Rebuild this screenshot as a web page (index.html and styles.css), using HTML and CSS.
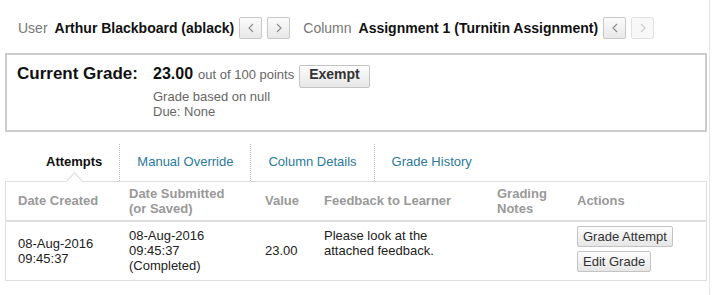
FILE: index.html
```html
<!DOCTYPE html>
<html lang="en">
<head>
    <meta charset="UTF-8">
    <title>Grade Details</title>
    <link rel="stylesheet" href="styles.css">
</head>
<body>
<div class="page">
    <div class="nav-row">
        <span class="nav-label">User</span>
        <span class="nav-value">Arthur Blackboard (ablack)</span>
        <span class="pager">
            <button class="pager-btn" title="Previous user">
                <svg width="6" height="10" viewBox="0 0 6 10"><polyline points="5,1 1,5 5,9"/></svg>
            </button>
            <button class="pager-btn" title="Next user">
                <svg width="6" height="10" viewBox="0 0 6 10"><polyline points="1,1 5,5 1,9"/></svg>
            </button>
        </span>
        <span class="nav-label">Column</span>
        <span class="nav-value">Assignment 1 (Turnitin Assignment)</span>
        <span class="pager">
            <button class="pager-btn" title="Previous column">
                <svg width="6" height="10" viewBox="0 0 6 10"><polyline points="5,1 1,5 5,9"/></svg>
            </button>
            <button class="pager-btn disabled" title="Next column">
                <svg width="6" height="10" viewBox="0 0 6 10"><polyline points="1,1 5,5 1,9"/></svg>
            </button>
        </span>
    </div>

    <div class="grade-box">
        <div class="grade-label">Current Grade:</div>
        <div class="grade-info">
            <div class="grade-line">
                <span class="grade-value">23.00</span>
                <span class="grade-points">out of 100 points</span>
                <button class="btn btn-exempt">Exempt</button>
            </div>
            <div class="grade-notes">
                <div>Grade based on null</div>
                <div>Due: None</div>
            </div>
        </div>
    </div>

    <ul class="tabs">
        <li class="tab active">Attempts</li>
        <li class="tab">Manual Override</li>
        <li class="tab">Column Details</li>
        <li class="tab">Grade History</li>
    </ul>

    <div class="attempts">
        <table>
            <colgroup>
                <col class="c-created">
                <col class="c-submitted">
                <col class="c-value">
                <col class="c-feedback">
                <col class="c-notes">
                <col>
            </colgroup>
            <thead>
                <tr>
                    <th>Date Created</th>
                    <th>Date Submitted<br>(or Saved)</th>
                    <th>Value</th>
                    <th>Feedback to Learner</th>
                    <th>Grading<br>Notes</th>
                    <th>Actions</th>
                </tr>
            </thead>
            <tbody>
                <tr>
                    <td>08-Aug-2016<br>09:45:37</td>
                    <td>08-Aug-2016<br>09:45:37<br>(Completed)</td>
                    <td>23.00</td>
                    <td><div class="feedback">Please look at the attached feedback.</div></td>
                    <td></td>
                    <td>
                        <button class="btn btn-action">Grade Attempt</button>
                        <button class="btn btn-action">Edit Grade</button>
                    </td>
                </tr>
            </tbody>
        </table>
    </div>
</div>
</body>
</html>
```

FILE: styles.css
```css
body {
    margin: 0;
    font-family: "Liberation Sans", Arial, sans-serif;
    color: #222;
    background: #fff;
}
.page {
    width: 710px;
    min-height: 295px;
    box-sizing: border-box;
    border-right: 1px solid #e6e6e6;
}

/* user / column switcher */
.nav-row {
    display: flex;
    align-items: center;
    height: 22px;
    padding: 17px 0 0 18px;
    font-size: 14px;
}
.nav-label {
    color: #777;
    margin-right: 7px;
}
.nav-value {
    font-weight: bold;
    color: #111;
    margin-right: 5px;
}
.pager {
    display: flex;
    gap: 5px;
    margin-right: 13px;
}
.pager-btn {
    display: flex;
    align-items: center;
    justify-content: center;
    width: 23px;
    height: 22px;
    padding: 0;
    border: 1px solid #c8c8c8;
    border-radius: 2px;
    background: linear-gradient(#fbfbfb, #e8e8e8);
}
.pager-btn svg polyline {
    fill: none;
    stroke: #8a8a8a;
    stroke-width: 1.1;
}
.pager-btn.disabled {
    border-color: #e2e2e2;
    background: #f8f8f8;
}
.pager-btn.disabled svg polyline {
    stroke: #ccc;
}

/* buttons */
.btn {
    box-sizing: border-box;
    font-family: "Liberation Sans", Arial, sans-serif;
    color: #333;
    border: 1px solid #c4c4c4;
    border-radius: 2px;
    background: linear-gradient(#fdfdfd, #e6e6e6);
}

/* current grade */
.grade-box {
    display: flex;
    align-items: baseline;
    margin: 14px 2px 0 5px;
    padding: 9px 10px 11px;
    border: 2px solid #ccc;
}
.grade-label {
    flex-shrink: 0;
    width: 136px;
    font-size: 17px;
    font-weight: bold;
    color: #111;
}
.grade-line {
    display: flex;
    align-items: baseline;
}
.grade-value {
    font-size: 16px;
    font-weight: bold;
    color: #111;
    margin-right: 5px;
}
.grade-points {
    font-size: 13px;
    color: #666;
    margin-right: 5px;
}
.btn-exempt {
    height: 23px;
    padding: 0 9px 4px;
    font-size: 14px;
    font-weight: bold;
}
.grade-notes {
    margin-top: 1px;
    font-size: 13px;
    line-height: 15px;
    color: #666;
}

/* tabs */
.tabs {
    display: flex;
    list-style: none;
    margin: 12px 0 0 29px;
    padding: 0;
}
.tab {
    position: relative;
    padding: 10px 17px 12px;
    font-size: 13px;
    line-height: 15px;
    color: #2b7a9b;
    border-right: 1px dotted #bbb;
}
.tab:last-child {
    border-right: none;
}
.tab.active {
    font-weight: bold;
    color: #111;
}
.tab.active::after {
    content: "";
    position: absolute;
    left: 50%;
    bottom: -7px;
    width: 12px;
    height: 12px;
    margin-left: -6px;
    background: #fff;
    border-top: 1px solid #ddd;
    border-left: 1px solid #ddd;
    transform: rotate(45deg);
    z-index: 1;
}

/* attempts table */
.attempts {
    margin: 0 2px 0 5px;
    border: 1px solid #ddd;
}
.attempts table {
    width: 100%;
    border-collapse: collapse;
    table-layout: fixed;
}
.c-created { width: 111px; }
.c-submitted { width: 136px; }
.c-value { width: 59px; }
.c-feedback { width: 173px; }
.c-notes { width: 80px; }
.attempts th {
    padding: 4px 12px;
    text-align: left;
    vertical-align: middle;
    font-size: 13px;
    line-height: 15px;
    font-weight: bold;
    color: #999;
    border-bottom: 2px solid #ddd;
}
.attempts td {
    padding: 4px 12px;
    vertical-align: middle;
    font-size: 13px;
    line-height: 15px;
    color: #222;
}
.feedback {
    padding-bottom: 15px;
}
.btn-action {
    display: block;
    height: 21px;
    margin-bottom: 4px;
    padding: 0 5px;
    font-size: 13px;
}
```
